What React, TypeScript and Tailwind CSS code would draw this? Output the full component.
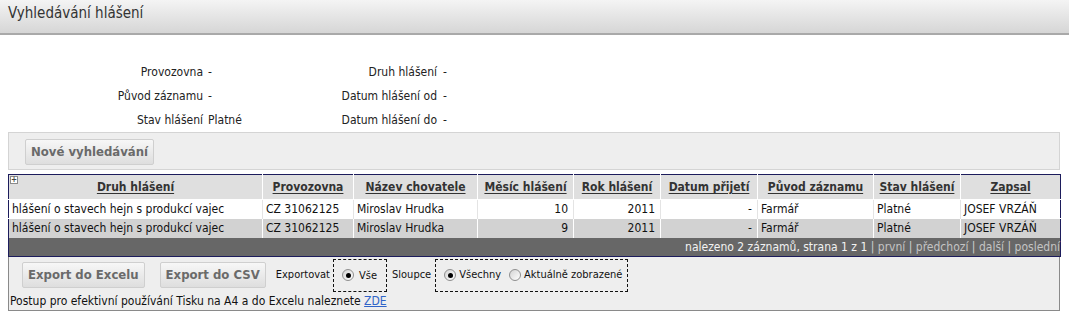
import React from "react";

const font = "font-['DejaVu_Sans_Condensed','DejaVu_Sans',sans-serif]";

const columns = [
  { label: "Druh hlášení", w: "w-[254px]", align: "text-left" },
  { label: "Provozovna", w: "w-[91px]", align: "text-left" },
  { label: "Název chovatele", w: "w-[124px]", align: "text-left" },
  { label: "Měsíc hlášení", w: "w-[96px]", align: "text-right" },
  { label: "Rok hlášení", w: "w-[87px]", align: "text-right" },
  { label: "Datum přijetí", w: "w-[97px]", align: "text-right" },
  { label: "Původ záznamu", w: "w-[116px]", align: "text-left" },
  { label: "Stav hlášení", w: "w-[87px]", align: "text-left" },
  { label: "Zapsal", w: "w-[100px]", align: "text-left" },
];

const rows = [
  ["hlášení o stavech hejn s produkcí vajec", "CZ 31062125", "Miroslav Hrudka", "10", "2011", "-", "Farmář", "Platné", "JOSEF VRZÁŇ"],
  ["hlášení o stavech hejn s produkcí vajec", "CZ 31062125", "Miroslav Hrudka", "9", "2011", "-", "Farmář", "Platné", "JOSEF VRZÁŇ"],
];

function FormRow({ l1, v1, l2, v2 }: { l1: string; v1: string; l2: string; v2: string }) {
  return (
    <div className="flex h-[24px] items-center text-[12px] text-[#222]">
      <div className="w-[195px] text-right">{l1}</div>
      <div className="w-[95px] pl-[5px]">{v1}</div>
      <div className="w-[139px] text-right">{l2}</div>
      <div className="pl-[6px]">{v2}</div>
    </div>
  );
}

function GrayButton({ children, className }: { children: React.ReactNode; className?: string }) {
  return (
    <button
      className={`h-[26px] rounded-[2px] border border-[#cfcfcf] bg-gradient-to-b from-[#f7f7f7] to-[#dedede] px-[5px] text-[13px] font-bold text-[#6a6a6a] ${className ?? ""}`}
    >
      {children}
    </button>
  );
}

function Radio({ checked }: { checked?: boolean }) {
  return (
    <span className="inline-flex h-[12px] w-[12px] items-center justify-center rounded-full border border-[#8f8f8f] bg-gradient-to-br from-[#d4d4d4] to-white">
      {checked && <span className="h-[5px] w-[5px] rounded-full bg-black" />}
    </span>
  );
}

export default function App() {
  return (
    <div className={`h-[319px] w-[1069px] overflow-hidden bg-white ${font}`}>
      {/* Title bar */}
      <div className="h-[35px] border-b-2 border-[#a9a9a9] bg-gradient-to-b from-[#f4f4f4] to-[#d6d6d6] pl-[8px] pt-[2px] text-[15px] text-[#333]">
        Vyhledávání hlášení
      </div>

      <div className="w-[1060px] pl-[8px]">
        {/* Filter summary */}
        <div className="pt-[25px]">
          <FormRow l1="Provozovna" v1="-" l2="Druh hlášení" v2="-" />
          <FormRow l1="Původ záznamu" v1="-" l2="Datum hlášení od" v2="-" />
          <FormRow l1="Stav hlášení" v1="Platné" l2="Datum hlášení do" v2="-" />
        </div>

        <div className="h-[38px] border border-[#d4d4d4] bg-[#eeeeee] pl-[16px] pt-[6px]">
          <GrayButton>Nové vyhledávání</GrayButton>
        </div>

        {/* Results */}
        <table className="mt-[4px] w-[1052px] table-fixed border-collapse border border-[#1c1c5c] text-[12px] text-[#111]">
          <colgroup>
            {columns.map((c) => (
              <col key={c.label} className={c.w} />
            ))}
          </colgroup>
          <thead>
            <tr className="h-[25px] bg-[#dfdfdf]">
              {columns.map((c, i) => (
                <th key={c.label} className="relative border-r border-white px-[3px] text-center font-bold text-[#333] last:border-r-0">
                  {i === 0 && (
                    <span className="absolute left-[1px] top-[1px] flex h-[8px] w-[8px] items-center justify-center border border-[#8a8a8a] bg-white text-[8px] leading-none text-[#444]">
                      +
                    </span>
                  )}
                  <span className="underline underline-offset-2">{c.label}</span>
                </th>
              ))}
            </tr>
          </thead>
          <tbody>
            {rows.map((r, ri) => (
              <tr key={ri} className={`h-[19px] border-t border-white ${ri === 0 ? "bg-white" : "bg-[#d2d2d2]"}`}>
                {r.map((cell, ci) => (
                  <td
                    key={ci}
                    className={`whitespace-nowrap border-r px-[3px] leading-none last:border-r-0 ${ri === 0 ? "border-[#e4e4e4]" : "border-white"} ${columns[ci].align} ${ci >= 3 && ci <= 5 ? "pr-[5px]" : ""}`}
                  >
                    {cell}
                  </td>
                ))}
              </tr>
            ))}
            <tr className="h-[19px] bg-[#676767]">
              <td colSpan={9} className="whitespace-nowrap pr-0 text-right leading-none text-[#f2f2f2]">
                nalezeno 2 záznamů, strana 1 z 1 <span className="text-[#cfcfcf]">|</span>{" "}
                <span className="text-[#c4c4c4]">první</span> <span className="text-[#cfcfcf]">|</span>{" "}
                <span className="text-[#c4c4c4]">předchozí</span> <span className="text-[#cfcfcf]">|</span>{" "}
                <span className="text-[#c4c4c4]">další</span> <span className="text-[#cfcfcf]">|</span>{" "}
                <span className="text-[#c4c4c4]">poslední</span>
              </td>
            </tr>
          </tbody>
        </table>

        {/* Export panel */}
        <div className="h-[54px] border-x border-b border-[#8a8a8a] bg-[#eeeeee]">
          <div className="flex h-[36px] items-center pl-[13px]">
            <GrayButton>Export do Excelu</GrayButton>
            <GrayButton className="ml-[15px]">Export do CSV</GrayButton>
            <span className="ml-[10px] text-[11px] text-[#111]">Exportovat</span>
            <div className="ml-[3px] flex h-[33px] items-center gap-[5px] border border-dashed border-[#111] pl-[8px] pr-[9px] text-[11px] text-[#111]">
              <Radio checked />
              <span className="pt-[3px]">Vše</span>
            </div>
            <span className="ml-[5px] text-[11px] text-[#111]">Sloupce</span>
            <div className="ml-[4px] flex h-[33px] items-center gap-[3px] border border-dashed border-[#111] pl-[8px] pr-[5px] text-[11px] text-[#111]">
              <Radio checked />
              <span>Všechny</span>
              <span className="ml-[2px]" />
              <Radio />
              <span>Aktuálně zobrazené</span>
            </div>
          </div>
          <div className="pl-[1px] pt-[1px] text-[12px] leading-[14px] text-[#111]">
            Postup pro efektivní používání Tisku na A4 a do Excelu naleznete{" "}
            <a className="text-[#2f63c8] underline">ZDE</a>
          </div>
        </div>
      </div>
    </div>
  );
}
